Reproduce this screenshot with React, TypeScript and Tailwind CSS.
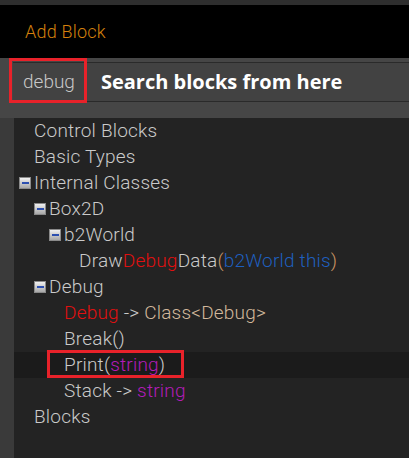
import React from "react";

const Minus = () => (
  <span className="w-[12px] h-[12px] mr-[3px] flex items-center justify-center bg-gradient-to-b from-[#f0f0f0] to-[#a8a8a8] border border-[#8a8a8a] shrink-0">
    <span className="block w-[7px] h-[2px] bg-[#2c4fb0]" />
  </span>
);

type Row = { indent: number; icon?: boolean; content: React.ReactNode; hl?: boolean };

const red = "text-[#e01010]";
const blue = "text-[#1f5fbf]";
const mag = "text-[#b21cb8]";
const tan = "text-[#c99464]";

const rows: Row[] = [
  { indent: 34, content: "Control Blocks" },
  { indent: 34, content: "Basic Types" },
  { indent: 19, icon: true, content: "Internal Classes" },
  { indent: 34, icon: true, content: "Box2D" },
  { indent: 49, icon: true, content: "b2World" },
  {
    indent: 79,
    content: (
      <>
        Draw<span className={red}>Debug</span>Data<span className={tan}>(</span>
        <span className={blue}>b2World this</span>
        <span className={tan}>)</span>
      </>
    ),
  },
  { indent: 34, icon: true, content: "Debug" },
  {
    indent: 64,
    content: (
      <>
        <span className={red}>Debug</span> -&gt; <span className="text-[#d2b89c]">Class&lt;Debug&gt;</span>
      </>
    ),
  },
  { indent: 64, content: "Break()" },
  {
    indent: 64,
    hl: true,
    content: (
      <>
        Print(<span className={mag}>string</span>)
      </>
    ),
  },
  {
    indent: 64,
    content: (
      <>
        Stack -&gt; <span className={mag}>string</span>
      </>
    ),
  },
  { indent: 34, content: "Blocks" },
];

export default function App() {
  return (
    <div className="w-[409px] h-[458px] overflow-hidden bg-[#222] flex flex-col" style={{ fontFamily: "Roboto, 'DejaVu Sans', sans-serif" }}>
      <div className="h-[5px] bg-[#2e2e2e] shrink-0" />
      <div className="h-[53px] bg-black flex items-center pl-[25px] shrink-0">
        <span className="text-[#d4800c] text-[18px] font-light tracking-[0.2px]">Add Block</span>
      </div>
      <div className="h-[60px] bg-[#464646] shrink-0 pt-[4px] pl-[13px]">
        <div className="relative h-[40px] bg-[#424242] border-y border-[#2a2a2a] flex items-center">
          <span className="absolute left-[-4px] top-[-5px] w-[78px] h-[45px] border-[3px] border-[#e8222a]" />
          <span className="ml-[10px] text-[#c8c8c8] text-[19px] font-light">debug</span>
          <span className="ml-[26px] text-white text-[20px] font-bold" style={{ fontFamily: "'Open Sans', sans-serif" }}>
            Search blocks from here
          </span>
        </div>
      </div>
      <div className="flex-1 flex">
        <div className="w-[14px] bg-[#3a3a3a] shrink-0" />
        <div className="flex-1 bg-[#232323] flex flex-col">
          {rows.map((r, i) => (
            <div
              key={i}
              className={`relative h-[26px] flex items-center text-[19px] font-light tracking-[0.2px] text-[#cacaca] ${r.hl ? "bg-[#1b1b1b]" : ""}`}
              style={{ paddingLeft: r.indent - 14 }}
            >
              {r.icon && <Minus />}
              <span className="whitespace-pre">{r.content}</span>
              {r.hl && (
                <span className="absolute left-[33px] w-[137px] top-[-2px] h-[28px] border-[3px] border-[#e8222a]" />
              )}
            </div>
          ))}
        </div>
      </div>
    </div>
  );
}
